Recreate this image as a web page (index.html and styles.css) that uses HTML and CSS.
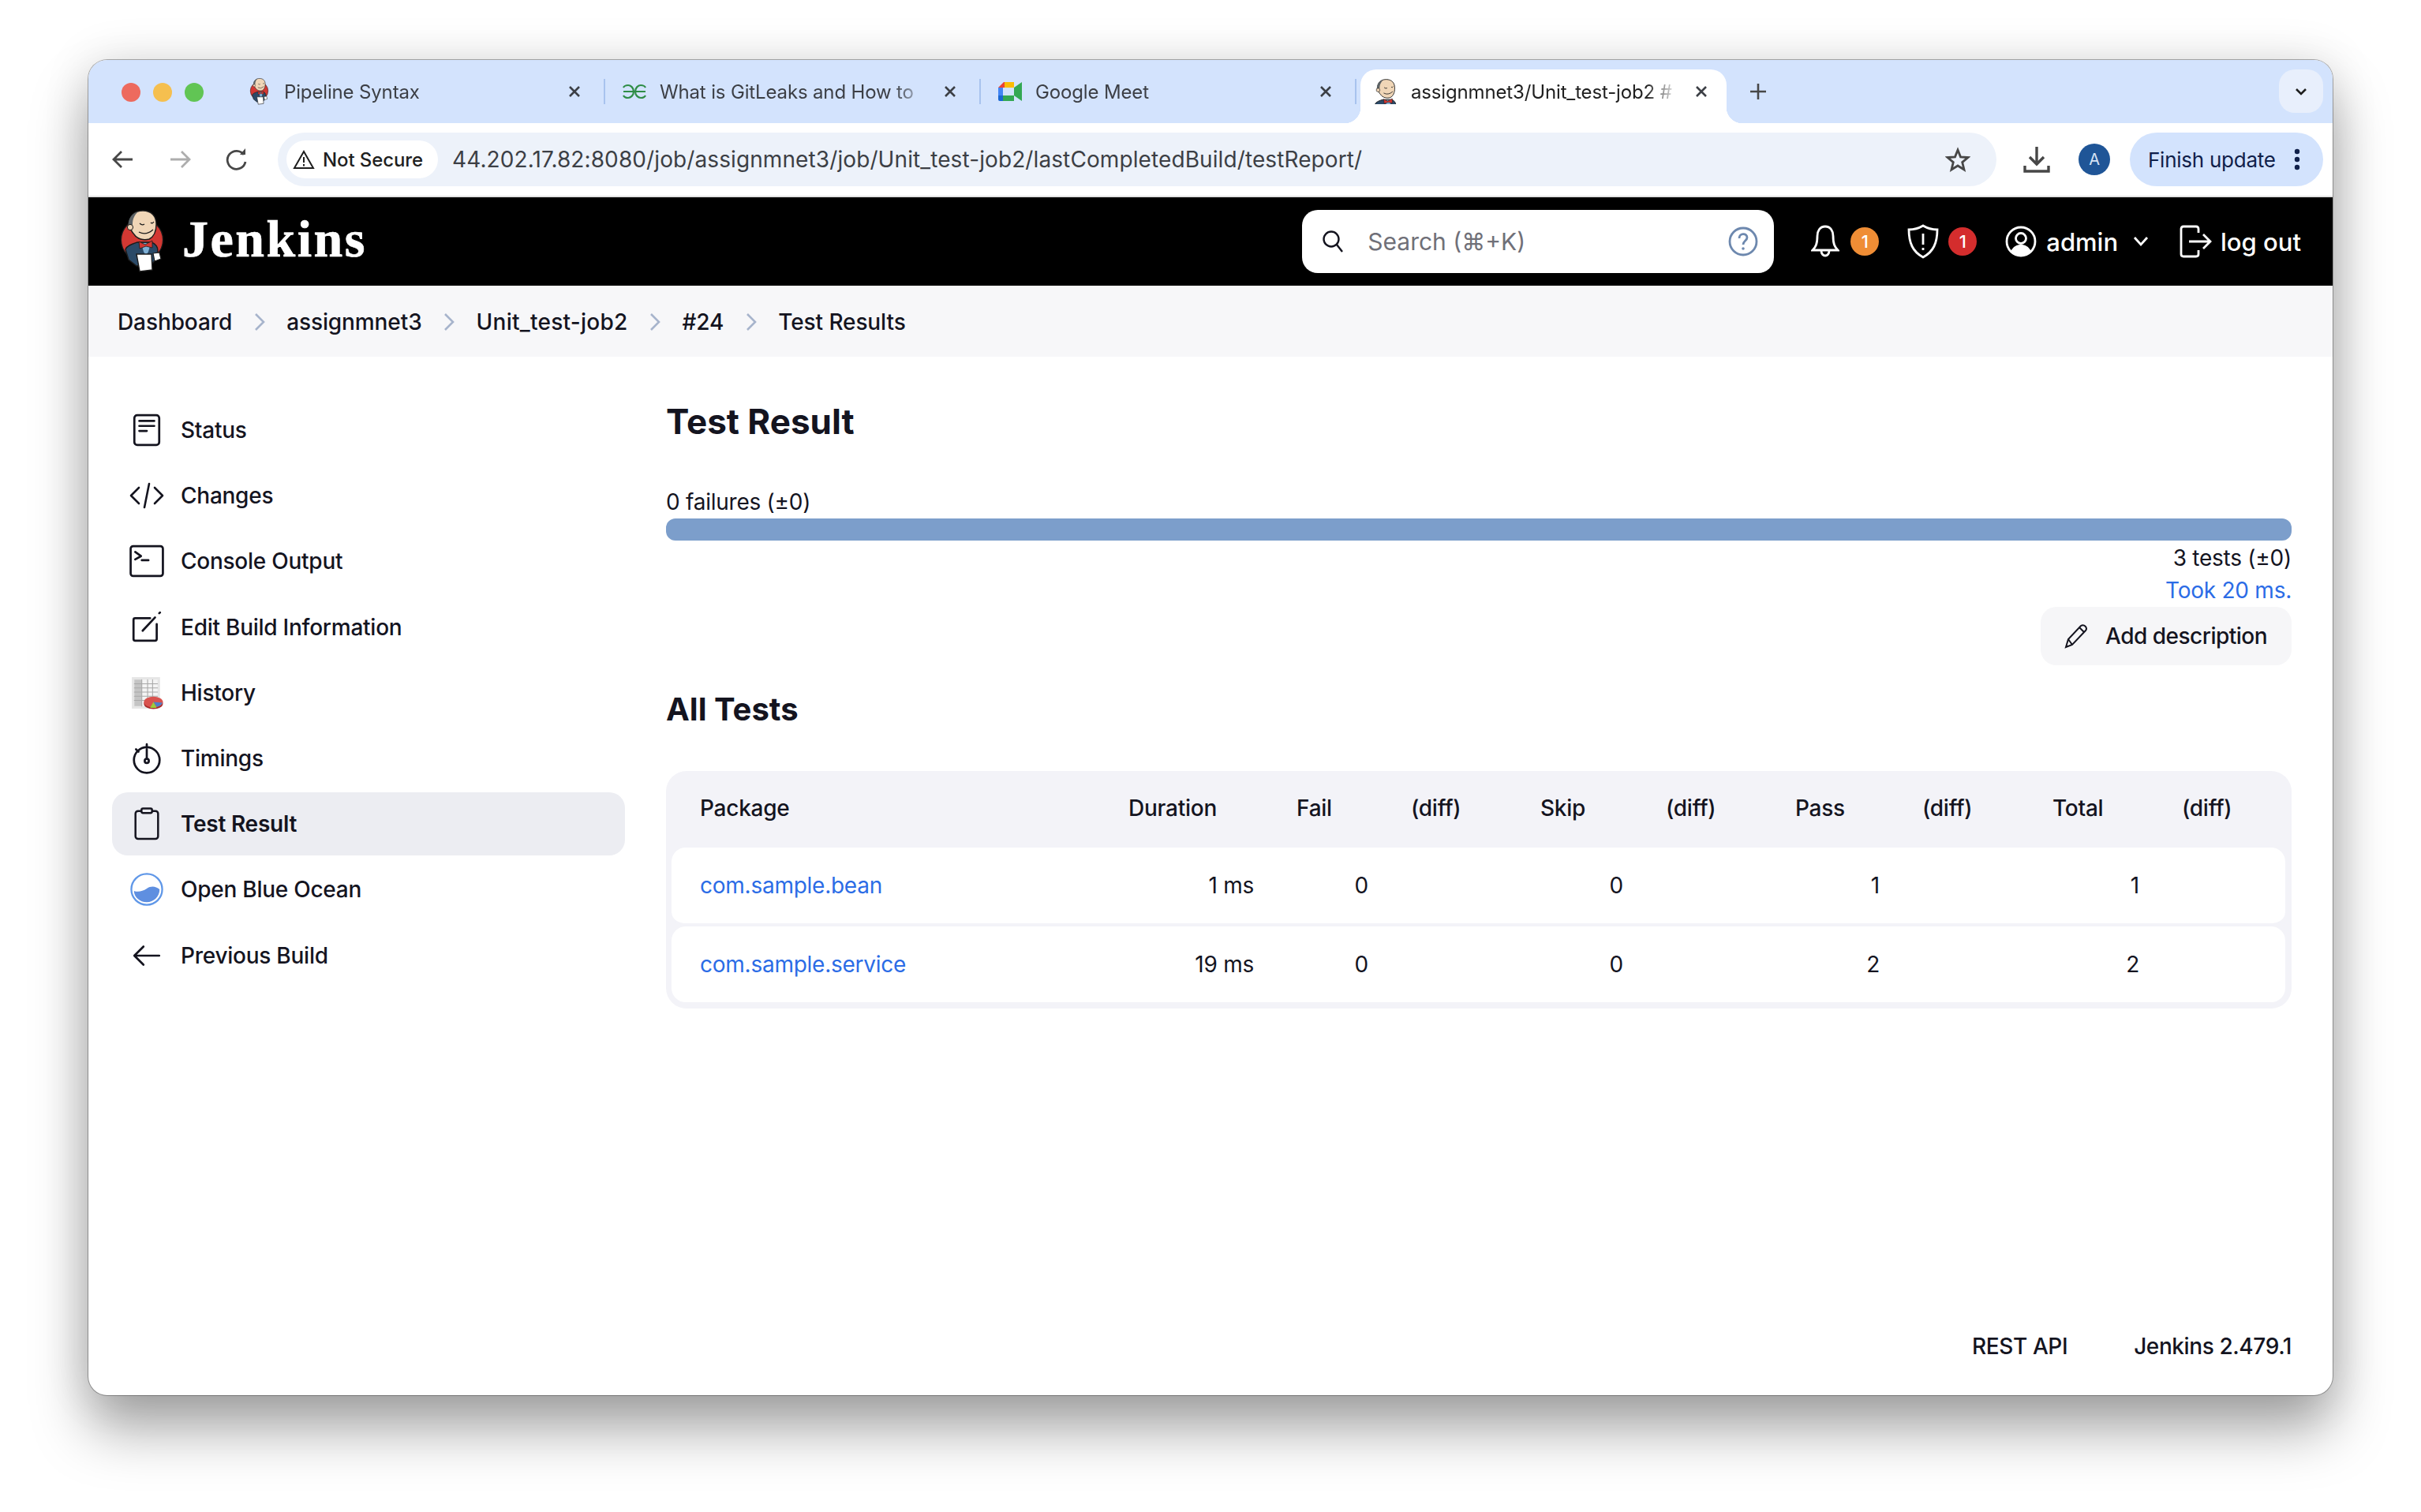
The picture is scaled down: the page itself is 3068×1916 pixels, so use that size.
FILE: index.html
```html
<!DOCTYPE html>
<html lang="en">
<head>
<meta charset="UTF-8">
<title>Test Result</title>
<link rel="stylesheet" href="styles.css">
</head>
<body>

<!-- shared logo parts -->
<svg class="defs" width="0" height="0">
  <defs>
    <g id="bust">
      <path d="M7 50C9 45 16 43 22 41L40 41C45 43 48 46 48 52L46 62L40 69L21 71L11 63Z" fill="#2b4a68" stroke="#1c1c1c" stroke-width="1.4"/>
      <path d="M27 42L39 42L36 53L33 58L30 53Z" fill="#7fb0d6"/>
      <path d="M24 40L32 44L41 39L41 48L33 46L25 49Z" fill="#d33833" stroke="#1c1c1c" stroke-width=".8"/>
      <path d="M12 19C11 8 18 1 29 1C40 1 46 8 46 18C46 27 43 34 37 37C30 39 22 37 18 31C15 28 13 24 12 19Z" fill="#f0d6b7" stroke="#1c1c1c" stroke-width="1.4"/>
      <path d="M11 24C9 14 13 5 23 2C18 7 16 12 16 18L14 23Z" fill="#5d6366"/>
      <circle cx="13" cy="22" r="3.6" fill="#f0d6b7" stroke="#1c1c1c" stroke-width="1"/>
      <path d="M25 17Q28 20 31 18M39 16Q41 18 43 15M24 28Q33 33 42 25" fill="none" stroke="#1c1c1c" stroke-width="1.3"/>
    </g>
    <g id="jenkins-logo">
      <circle cx="28" cy="38" r="26.5" fill="#d33833" stroke="#1c1c1c" stroke-width="1.2"/>
      <use href="#bust"/>
      <path d="M21 56L40 56L41 76L25 78Z" fill="#fff" stroke="#1c1c1c" stroke-width="1.4"/>
      <path d="M42 55L50 54L52 62L44 65Z" fill="#fff" stroke="#1c1c1c" stroke-width="1.2"/>
    </g>
  </defs>
</svg>

<div class="window">

  <!-- Tab strip -->
  <div class="tabstrip">
    <div class="lights"><span class="red"></span><span class="yellow"></span><span class="green"></span></div>

    <div class="tab">
      <span class="favicon"><svg width="25" height="34" viewBox="0 0 56 80"><use href="#jenkins-logo"/></svg></span>
      <span class="tab-title">Pipeline Syntax</span>
      <svg class="tab-close" viewBox="0 0 28 28"><path d="M8 8L20 20M20 8L8 20"/></svg>
      <i class="tab-sep"></i>
    </div>
    <div class="tab">
      <span class="favicon"><svg width="30" height="20" viewBox="0 0 30 20" fill="none" stroke="#2f8d46" stroke-width="2.2"><path d="M1 10H14C14 5 10 2 7 2C4 2 2 3 1 5M1 15C2 17 4 18 7 18C10 18 14 15 14 10M29 10H16C16 5 20 2 23 2C26 2 28 3 29 5M29 15C28 17 26 18 23 18C20 18 16 15 16 10"/></svg></span>
      <span class="tab-title">What is GitLeaks and How to</span>
      <svg class="tab-close" viewBox="0 0 28 28"><path d="M8 8L20 20M20 8L8 20"/></svg>
      <i class="tab-sep"></i>
    </div>
    <div class="tab">
      <span class="favicon"><svg width="30" height="24" viewBox="0 0 30 24">
        <path d="M8 0H20V7H8Z" fill="#fbbc04"/><path d="M0 7L7 0H8V7Z" fill="#ea4335"/>
        <path d="M0 7H6V17H0Z" fill="#4285f4"/><path d="M0 17H6V24H2Q0 24 0 22Z" fill="#1967d2"/>
        <path d="M6 17H20V24H6Z" fill="#34a853"/>
        <path d="M20 7V17L30 24V0Z" fill="#34a853"/><path d="M20 4Q20 0 16 0H20Z" fill="#fbbc04"/>
      </svg></span>
      <span class="tab-title">Google Meet</span>
      <svg class="tab-close" viewBox="0 0 28 28"><path d="M8 8L20 20M20 8L8 20"/></svg>
      <i class="tab-sep"></i>
    </div>
    <div class="tab active">
      <span class="favicon"><svg width="30" height="32" viewBox="6 0 44 50"><use href="#bust"/></svg></span>
      <span class="tab-title">assignmnet3/Unit_test-job2 #</span>
      <svg class="tab-close" viewBox="0 0 28 28"><path d="M8 8L20 20M20 8L8 20"/></svg>
    </div>

    <svg class="new-tab" viewBox="0 0 40 40"><path d="M20 10V30M10 20H30"/></svg>
    <div class="tab-search"><svg width="20" height="20" viewBox="0 0 20 20"><path d="M4 7L10 13L16 7"/></svg></div>
  </div>

  <!-- Toolbar -->
  <div class="toolbar">
    <svg class="tool nav" viewBox="0 0 40 40"><path d="M32 20H9M18 10L8 20L18 30"/></svg>
    <svg class="tool nav dim" viewBox="0 0 40 40"><path d="M8 20H31M22 10L32 20L22 30"/></svg>
    <svg class="tool nav" viewBox="0 0 40 40"><path d="M29 14A11.500 11.500 0 1 0 31 23"/><path class="solid" d="M24 14H31V6Z"/></svg>
    <div class="address">
      <div class="chip">
        <svg width="28" height="26" viewBox="0 0 28 26"><path d="M14 3L26 24H2Z" fill="none" stroke="#1f1f1f" stroke-width="2"/><path d="M14 10V17M14 19V21.500" stroke="#1f1f1f" stroke-width="2"/></svg>
        <span>Not Secure</span>
      </div>
      <span class="url">44.202.17.82:8080/job/assignmnet3/job/Unit_test-job2/lastCompletedBuild/testReport/</span>
      <svg class="star" width="32" height="32" viewBox="0 0 32 32"><path d="M16 4L19.500 12.800L29 13.500L21.700 19.600L24 29L16 24L8 29L10.300 19.600L3 13.500L12.500 12.800Z"/></svg>
    </div>
    <svg class="tool download" viewBox="0 0 40 40"><path d="M20 4V26M11 17L20 26L29 17M5 28V35H35V28"/></svg>
    <div class="avatar">A</div>
    <div class="finish">
      <span>Finish update</span>
      <svg width="8" height="28" viewBox="0 0 8 28"><circle cx="4" cy="4" r="3.200"/><circle cx="4" cy="14" r="3.200"/><circle cx="4" cy="24" r="3.200"/></svg>
    </div>
  </div>

  <!-- Jenkins header -->
  <header class="jenkins-head">
    <svg class="logo" width="56" height="80" viewBox="0 0 56 80"><use href="#jenkins-logo"/></svg>
    <span class="brand">Jenkins</span>
    <div class="search">
      <svg class="search-icon" width="28" height="30" viewBox="0 0 28 30"><circle cx="12" cy="12" r="9.500"/><path d="M19 19L26 28"/></svg>
      <span class="search-text">Search (⌘+K)</span>
      <svg class="help" width="38" height="38" viewBox="0 0 38 38"><circle cx="19" cy="19" r="17"/><path d="M14 15C14 8 24 8 24 14C24 18 19 18 19 23"/><circle class="dot" cx="19" cy="28" r="1.800"/></svg>
    </div>
    <svg class="h-icon bell" width="36" height="42" viewBox="0 0 36 42"><path d="M18 2C11 2 8 8 8 14C8 24 6 28 2 32H34C30 28 28 24 28 14C28 8 25 2 18 2ZM13 33A5 6 0 0 0 23 33"/></svg>
    <span class="badge orange">1</span>
    <svg class="h-icon shield" width="42" height="44" viewBox="0 0 42 44"><path d="M21 2C16 5 10 7 3 7C3 24 8 35 21 42C34 35 39 24 39 7C32 7 26 5 21 2Z"/><path d="M21 12V26M21 30V33"/></svg>
    <span class="badge crimson">1</span>
    <svg class="h-icon person" width="40" height="40" viewBox="0 0 40 40"><circle cx="20" cy="20" r="18"/><circle cx="20" cy="16" r="6.500"/><path class="fill" d="M7 33C10 26 15 24 20 24C25 24 30 26 33 33C29 37 25 38 20 38C15 38 11 37 7 33Z"/></svg>
    <span class="h-text admin">admin</span>
    <svg class="h-icon caret" width="20" height="14" viewBox="0 0 20 14"><path d="M2 2L10 11L18 2"/></svg>
    <svg class="h-icon logout" width="42" height="42" viewBox="0 0 42 42"><path d="M24 10V5Q24 2 21 2H5Q2 2 2 5V37Q2 40 5 40H21Q24 40 24 37V32M12 21H39M30 12L39 21L30 30"/></svg>
    <span class="h-text">log out</span>
  </header>

  <!-- Breadcrumbs -->
  <nav class="crumbs">
    <span>Dashboard</span><svg viewBox="0 0 14 24"><path d="M2 2L12 12L2 22"/></svg>
    <span>assignmnet3</span><svg viewBox="0 0 14 24"><path d="M2 2L12 12L2 22"/></svg>
    <span>Unit_test-job2</span><svg viewBox="0 0 14 24"><path d="M2 2L12 12L2 22"/></svg>
    <span>#24</span><svg viewBox="0 0 14 24"><path d="M2 2L12 12L2 22"/></svg>
    <span>Test Results</span>
  </nav>

  <div class="page">
    <!-- Side panel -->
    <aside class="side">
      <a class="side-item"><svg viewBox="0 0 40 40"><rect x="5" y="2" width="30" height="36" rx="3.500"/><path d="M11 9H29M11 15H29M11 21H20"/></svg>Status</a>
      <a class="side-item"><svg viewBox="0 0 44 40"><path d="M12 10L2 20L12 30M32 10L42 20L32 30M25 5L19 35"/></svg>Changes</a>
      <a class="side-item"><svg viewBox="0 0 42 40"><rect x="1.500" y="2" width="39" height="36" rx="3"/><path d="M7 9L14 14L7 18M15 19H23"/></svg>Console Output</a>
      <a class="side-item"><svg viewBox="0 0 40 40"><path d="M24 9H6Q4 9 4 11V34Q4 36 6 36H30Q32 36 32 34V16M15 24L30 8M35 3L36 2"/></svg>Edit Build Information</a>
      <a class="side-item"><svg class="raw" viewBox="0 0 40 40">
        <rect x="2" y="1" width="34" height="38" fill="#e6e6e6" stroke="#b5b5b5"/>
        <rect x="5" y="4" width="28" height="32" fill="#f4f4f4"/>
        <rect x="5" y="4" width="9" height="32" fill="#c4c4c4"/>
        <path d="M5 9H33M5 14H33M5 19H33M5 24H33M5 29H33M14 4V36M21 4V36M27 4V36" stroke="#a8a8a8" stroke-width="1"/>
        <ellipse cx="28" cy="33" rx="11.500" ry="6.500" fill="#a92a2a"/>
        <ellipse cx="28" cy="31" rx="11.500" ry="6.500" fill="#d9534f"/>
        <path d="M28 31L39 32Q37 36 32 37Z" fill="#4f7fc8"/>
        <path d="M28 31L32 38L24 38Z" fill="#9ccc3c"/>
      </svg>History</a>
      <a class="side-item"><svg viewBox="0 0 40 40"><circle cx="20" cy="22" r="15.500"/><circle cx="20" cy="23" r="2.500"/><path d="M20 20V9M20 3V6M7 9L10 12"/></svg>Timings</a>
      <a class="side-item current"><svg viewBox="0 0 40 44"><rect x="5" y="5" width="30" height="37" rx="3.500"/><rect x="13" y="1.500" width="14" height="6" rx="2" class="clip"/></svg>Test Result</a>
      <a class="side-item"><svg class="raw" viewBox="0 0 44 44"><circle cx="22" cy="22" r="20.500" fill="#fff" stroke="#5f97e8" stroke-width="2.400"/><path d="M5 24C10 26 16 25 22 21C28 17 34 18 39 22C39 32 31 39 22 39C13 39 5 32 5 24Z" fill="#5f8fe0"/></svg>Open Blue Ocean</a>
      <a class="side-item"><svg viewBox="0 0 40 40"><path d="M35 20H6M16 9L5 20L16 31"/></svg>Previous Build</a>
    </aside>

    <!-- Main panel -->
    <main class="main">
      <h1>Test Result</h1>
      <div class="failures">0 failures (±0)</div>
      <div class="bar"></div>
      <div class="counts first">3 tests (±0)</div>
      <div class="counts"><a class="link">Took 20 ms.</a></div>
      <div class="actions">
        <button class="add-desc"><svg width="30" height="32" viewBox="0 0 30 32"><path d="M2 30L5 20L21 3Q24 1 27 4Q29 7 27 9L10 27ZM5 20L10 27M19 5L25 11"/></svg>Add description</button>
      </div>
      <h2>All Tests</h2>

      <div class="results">
        <table>
          <thead>
            <tr><th>Package</th><th>Duration</th><th>Fail</th><th>(diff)</th><th>Skip</th><th>(diff)</th><th>Pass</th><th>(diff)</th><th>Total</th><th>(diff)</th></tr>
          </thead>
          <tbody>
            <tr><td><a class="link">com.sample.bean</a></td><td>1 ms</td><td>0</td><td></td><td>0</td><td></td><td>1</td><td></td><td>1</td><td></td></tr>
            <tr><td><a class="link">com.sample.service</a></td><td>19 ms</td><td>0</td><td></td><td>0</td><td></td><td>2</td><td></td><td>2</td><td></td></tr>
          </tbody>
        </table>
      </div>

      <footer class="foot"><span>REST API</span><span>Jenkins 2.479.1</span></footer>
    </main>
  </div>
</div>
</body>
</html>
```

FILE: styles.css
```css
:root { --ink:#14141f; --link:#2b6ce6; --strip:#d3e3fd; --panel:#f3f3f8; }
*{box-sizing:border-box;}
html,body{margin:0;height:100%;}
body{background:#fff;padding:76px 0 0 112px;font-family:Inter,"Liberation Sans",sans-serif;font-size:28px;letter-spacing:-.25px;color:var(--ink);overflow:hidden;}
.defs{display:block;height:0;}

.window{width:2844px;height:1692px;display:flex;flex-direction:column;background:#fff;border-radius:24px;overflow:hidden;box-shadow:0 0 0 1px rgba(0,0,0,.3),0 44px 70px rgba(0,0,0,.34),0 0 60px rgba(0,0,0,.12);}

/* Tab strip */
.tabstrip{height:80px;flex:none;background:var(--strip);display:flex;align-items:flex-start;padding-top:12px;font-size:24px;letter-spacing:-.15px;color:#3c3f45;}
.lights{display:flex;gap:16px;padding:17px 0 0 42px;margin-right:38px;}
.lights span{width:24px;height:24px;border-radius:50%;}
.lights .red{background:#ed6a5e;} .lights .yellow{background:#f5bf4f;} .lights .green{background:#61c554;}
.tab{width:476px;height:68px;flex:none;display:flex;align-items:center;padding:0 5px 12px 16px;position:relative;}
.favicon{width:32px;height:34px;display:flex;align-items:center;justify-content:center;flex:none;}
.tab-title{flex:1;margin-left:16px;white-space:nowrap;overflow:hidden;-webkit-mask-image:linear-gradient(to right,#000 84%,transparent 96%);mask-image:linear-gradient(to right,#000 84%,transparent 96%);}
.tab-close{width:28px;height:28px;flex:none;fill:none;stroke:#3c3f45;stroke-width:2.6;}
.tab-sep{width:2px;height:32px;background:#a8c3ee;margin-left:23px;flex:none;}
.tab.active{width:464px;background:#fff;border-radius:20px 20px 0 0;padding-right:18px;color:#1f1f1f;}
.tab.active::before,.tab.active::after{content:"";position:absolute;bottom:0;width:20px;height:20px;}
.tab.active::before{left:-20px;background:radial-gradient(circle at 0 0,transparent 20px,#fff 20.5px);}
.tab.active::after{right:-20px;background:radial-gradient(circle at 100% 0,transparent 20px,#fff 20.5px);}
.new-tab{width:40px;height:40px;margin:8px 0 0 20px;fill:none;stroke:#474747;stroke-width:2.6;flex:none;}
.tab-search{width:56px;height:55px;margin-left:auto;margin-right:12px;background:#e8effc;border-radius:20px;display:flex;align-items:center;justify-content:center;}
.tab-search svg{fill:none;stroke:#1f1f1f;stroke-width:2.6;}

/* Toolbar */
.toolbar{height:94px;flex:none;background:#fff;border-bottom:2px solid #e3e3e3;border-radius:20px 20px 0 0;display:flex;align-items:center;padding:0 12px 0 24px;position:relative;z-index:1;}
.tool{width:40px;height:40px;flex:none;fill:none;stroke:#474747;stroke-width:2.8;}
.nav{margin-right:32px;}
.nav.dim{stroke:#adadad;}
.tool .solid{fill:#474747;stroke:none;}
.address{flex:1;height:68px;background:#edf2fa;border-radius:34px;display:flex;align-items:center;padding:0 33px 0 11px;}
.chip{height:48px;width:192px;flex:none;background:#fff;border-radius:24px;display:flex;align-items:center;padding-left:8px;gap:10px;font-size:24px;letter-spacing:-.1px;font-weight:500;color:#1f1f1f;white-space:nowrap;}
.url{margin-left:18px;font-size:28px;letter-spacing:.1px;color:#3c3f45;white-space:nowrap;}
.star{margin-left:auto;fill:none;stroke:#474747;stroke-width:2.8;}
.download{margin-left:31px;stroke-width:3.4;}
.avatar{width:40px;height:40px;margin-left:33px;border-radius:50%;background:#1f5597;color:#d8e4f5;font-size:20px;display:flex;align-items:center;justify-content:center;flex:none;}
.finish{width:245px;height:68px;margin-left:25px;background:var(--strip);border-radius:34px;display:flex;align-items:center;padding-left:23px;gap:23px;font-size:26px;color:#10204a;flex:none;white-space:nowrap;}
.finish svg{fill:#10204a;flex:none;}

/* Jenkins header */
.jenkins-head{height:112px;flex:none;background:#000;color:#fff;display:flex;align-items:center;padding:0 40px;letter-spacing:0;}
.logo{flex:none;}
.brand{font-family:"Liberation Serif",serif;font-weight:700;font-size:66px;margin:0 0 6px 23px;letter-spacing:2.5px;-webkit-text-stroke:.7px #fff;}
.search{width:598px;height:80px;margin-left:auto;background:#fff;border-radius:20px;display:flex;align-items:center;padding:0 20px 0 25px;color:#707078;font-size:30px;}
.search-icon{fill:none;stroke:#14141f;stroke-width:2.4;flex:none;}
.search-text{margin-left:30px;}
.help{margin-left:auto;fill:none;stroke:#6d88ae;stroke-width:2.800;}
.help .dot{fill:#6d88ae;stroke:none;}
.h-icon{fill:none;stroke:#fff;stroke-width:2.800;flex:none;}
.h-icon .fill{fill:#fff;stroke:none;}
.bell{margin-left:47px;}
.badge{width:36px;height:36px;border-radius:50%;display:flex;align-items:center;justify-content:center;font-size:22px;font-weight:500;flex:none;}
.badge.orange{background:#ef8d35;margin-left:14px;}
.badge.crimson{background:#d42d2d;margin-left:11px;}
.shield{margin-left:35px;}
.person{margin-left:36px;}
.h-text{font-size:31px;font-weight:500;white-space:nowrap;}
.admin{margin-left:12px;}
.caret{margin-left:19px;}
.logout{margin:0 10px 0 39px;}

/* Breadcrumbs */
.crumbs{height:90px;flex:none;background:#f7f7f9;display:flex;align-items:center;padding:2px 0 0 37px;font-weight:500;font-size:28px;letter-spacing:-.1px;}
.crumbs span:nth-of-type(3){letter-spacing:.25px;}
.crumbs svg{width:14px;height:24px;margin:0 27.500px;fill:none;stroke:#a7b4cc;stroke-width:2.6;flex:none;}

/* Page body */
.page{flex:1;display:flex;min-height:0;}
.side{width:650px;margin-left:30px;padding-top:53px;flex:none;display:flex;flex-direction:column;gap:3.2px;}
.side-item{height:80px;display:flex;align-items:center;padding-left:22px;gap:21px;border-radius:20px;font-weight:500;}
.side-item svg{width:44px;height:42px;flex:none;fill:none;stroke:var(--ink);stroke-width:2.600;stroke-linecap:round;stroke-linejoin:round;}
.side-item svg.raw{stroke:none;stroke-width:0;}
.side-item.current{background:#ecedf2;font-weight:600;}
.side-item .clip{fill:#ecedf2;}

.main{flex:1;margin:0 52px 0 52px;padding-top:52px;display:flex;flex-direction:column;min-width:0;}
h1,h2{margin:0;line-height:60px;font-weight:700;letter-spacing:0;}
h1{font-size:44px;}
h2{font-size:40px;margin-top:26px;}
.failures{margin-top:52px;line-height:40px;}
.bar{height:28px;margin-top:1px;background:#7c9ecb;border-radius:12px;}
.counts{text-align:right;line-height:41px;}
.counts.first{margin-top:2px;}
.link{color:var(--link);}
.actions{display:flex;justify-content:flex-end;}
.add-desc{height:74px;width:318px;border:none;background:#f6f6f8;border-radius:20px;display:flex;align-items:center;gap:22px;padding:0 0 0 30px;font:500 28px Inter,"Liberation Sans",sans-serif;letter-spacing:-.5px;color:var(--ink);}
.add-desc svg{fill:none;stroke:var(--ink);stroke-width:2;flex:none;}

/* Results table */
.results{margin-top:48px;background:var(--panel);border-radius:26px;padding:0 8px 8px 7px;}
table{width:100%;table-layout:fixed;border-collapse:separate;border-spacing:0;}
th{height:97px;font-weight:500;text-align:left;padding:0 27px 3px;}
td{height:96px;background:#fff;text-align:right;padding:0 27px;}
tbody tr:first-child td{border-bottom:4px solid var(--panel);height:100px;}
th:nth-child(1),td:nth-child(1){width:552px;padding-left:36px;text-align:left;}
th:nth-child(2){width:213px;}
th:nth-child(3){width:145px;}
th:nth-child(4){width:164px;}
th:nth-child(5){width:159px;}
th:nth-child(6){width:164px;}
th:nth-child(7){width:161px;}
th:nth-child(8){width:165px;}
th:nth-child(9){width:164px;}
td:first-child{border-radius:18px 0 0 18px;}
td:last-child{border-radius:0 18px 18px 0;}

.foot{margin-top:auto;height:79px;display:flex;justify-content:flex-end;align-items:flex-start;gap:84px;font-weight:500;letter-spacing:-.4px;}
```
